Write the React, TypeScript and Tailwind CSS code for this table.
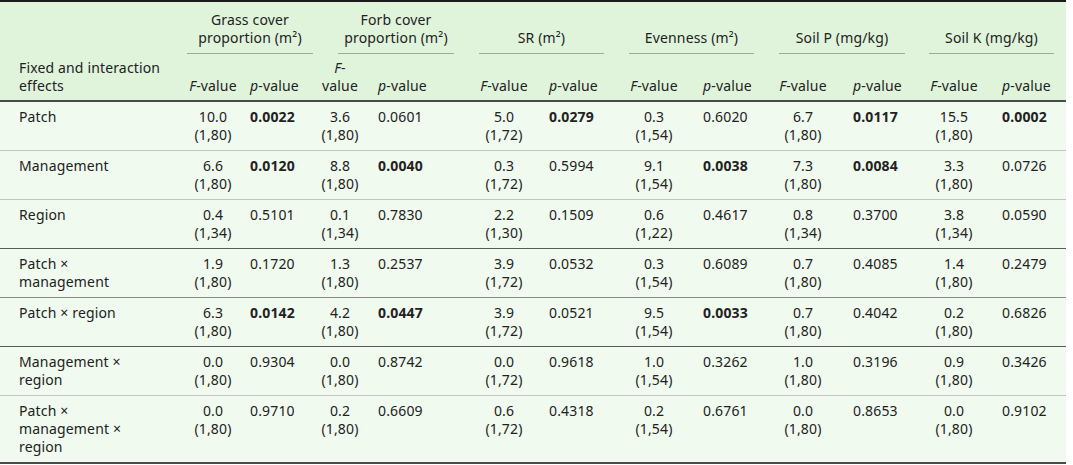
import React from "react";

type Cell = { f: string; df: string; p: string; bold?: boolean };

interface IRow {
  label: React.ReactNode;
  cells: Cell[];
  border: string;
}

const widths = [182, 62, 64, 64, 93, 78, 68, 86, 62, 88, 65, 84, 70];

const groups = [
  { title: <>Grass cover<br />proportion (m²)</>, line: "ml-[5px] w-[126px]" },
  { title: <>Forb cover<br />proportion (m²)</>, line: "ml-[30px] w-[116px]" },
  { title: <>SR (m²)</>, line: "ml-[14px] w-[125px]" },
  { title: <>Evenness (m²)</>, line: "ml-[18px] w-[125px]" },
  { title: <>Soil P (mg/kg)</>, line: "ml-[20px] w-[126px]" },
  { title: <>Soil K (mg/kg)</>, line: "ml-[17px] w-[125px]" },
];

const c = (f: string, df: string, p: string, bold = false): Cell => ({ f, df, p, bold });

const rows: IRow[] = [
  {
    label: "Patch",
    border: "border-b border-[#c4c4c4]",
    cells: [
      c("10.0", "(1,80)", "0.0022", true),
      c("3.6", "(1,80)", "0.0601"),
      c("5.0", "(1,72)", "0.0279", true),
      c("0.3", "(1,54)", "0.6020"),
      c("6.7", "(1,80)", "0.0117", true),
      c("15.5", "(1,80)", "0.0002", true),
    ],
  },
  {
    label: "Management",
    border: "border-b border-[#c4c4c4]",
    cells: [
      c("6.6", "(1,80)", "0.0120", true),
      c("8.8", "(1,80)", "0.0040", true),
      c("0.3", "(1,72)", "0.5994"),
      c("9.1", "(1,54)", "0.0038", true),
      c("7.3", "(1,80)", "0.0084", true),
      c("3.3", "(1,80)", "0.0726"),
    ],
  },
  {
    label: "Region",
    border: "border-b border-[#5a5a5a]",
    cells: [
      c("0.4", "(1,34)", "0.5101"),
      c("0.1", "(1,34)", "0.7830"),
      c("2.2", "(1,30)", "0.1509"),
      c("0.6", "(1,22)", "0.4617"),
      c("0.8", "(1,34)", "0.3700"),
      c("3.8", "(1,34)", "0.0590"),
    ],
  },
  {
    label: <>Patch ×<br />management</>,
    border: "border-b border-[#8a8a8a]",
    cells: [
      c("1.9", "(1,80)", "0.1720"),
      c("1.3", "(1,80)", "0.2537"),
      c("3.9", "(1,72)", "0.0532"),
      c("0.3", "(1,54)", "0.6089"),
      c("0.7", "(1,80)", "0.4085"),
      c("1.4", "(1,80)", "0.2479"),
    ],
  },
  {
    label: "Patch × region",
    border: "border-b border-[#5a5a5a]",
    cells: [
      c("6.3", "(1,80)", "0.0142", true),
      c("4.2", "(1,80)", "0.0447", true),
      c("3.9", "(1,72)", "0.0521"),
      c("9.5", "(1,54)", "0.0033", true),
      c("0.7", "(1,80)", "0.4042"),
      c("0.2", "(1,80)", "0.6826"),
    ],
  },
  {
    label: <>Management ×<br />region</>,
    border: "border-b border-[#c4c4c4]",
    cells: [
      c("0.0", "(1,80)", "0.9304"),
      c("0.0", "(1,80)", "0.8742"),
      c("0.0", "(1,72)", "0.9618"),
      c("1.0", "(1,54)", "0.3262"),
      c("1.0", "(1,80)", "0.3196"),
      c("0.9", "(1,80)", "0.3426"),
    ],
  },
  {
    label: <>Patch ×<br />management ×<br />region</>,
    border: "border-b-2 border-[#4a4a4a]",
    cells: [
      c("0.0", "(1,80)", "0.9710"),
      c("0.2", "(1,80)", "0.6609"),
      c("0.6", "(1,72)", "0.4318"),
      c("0.2", "(1,54)", "0.6761"),
      c("0.0", "(1,80)", "0.8653"),
      c("0.0", "(1,80)", "0.9102"),
    ],
  },
];

const FHead = () => (
  <>
    <i>F</i>-value
  </>
);
const PHead = () => (
  <>
    <i>p</i>-value
  </>
);

export default function App() {
  return (
    <div className="w-[1073px] h-[465px] bg-white overflow-hidden">
      <table
        className="table-fixed border-collapse w-[1066px] text-[14px] tracking-[0.15px] leading-[18px] text-[#222] whitespace-nowrap"
        style={{ fontFamily: '"Noto Sans", "Open Sans", sans-serif' }}
      >
        <colgroup>
          {widths.map((w, i) => (
            <col key={i} style={{ width: w }} />
          ))}
        </colgroup>
        <thead className="bg-[#dff4db]">
          <tr className="border-t-2 border-[#1a1a1a]">
            <th
              rowSpan={2}
              className="font-normal text-left align-bottom pl-[19px] pb-[5px]"
            >
              Fixed and interaction
              <br />
              effects
            </th>
            {groups.map((g, i) => (
              <th key={i} colSpan={2} className="font-normal p-0 align-bottom pt-[9px]">
                <div className={`${g.line} text-center border-b border-[#9aab98] pb-[6px]`}>
                  {g.title}
                </div>
              </th>
            ))}
          </tr>
          <tr className="border-b-2 border-[#4a4a4a]">
            {groups.map((_, i) => (
              <React.Fragment key={i}>
                <th className="font-normal text-center align-bottom pt-[5px] pb-[5px]">
                  {i === 1 ? (
                    <>
                      <i>F</i>-<br />value
                    </>
                  ) : (
                    <FHead />
                  )}
                </th>
                <th className="font-normal text-left align-bottom pl-[6px] pb-[5px]">
                  <PHead />
                </th>
              </React.Fragment>
            ))}
          </tr>
        </thead>
        <tbody className="bg-[#f0faef]">
          {rows.map((r, ri) => (
            <tr key={ri} className={r.border}>
              <td className="align-top pl-[19px] pt-[6px] pb-[6px]">{r.label}</td>
              {r.cells.map((cell, ci) => (
                <React.Fragment key={ci}>
                  <td className="align-top text-center pt-[6px] pb-[6px]">
                    {cell.f}
                    <br />
                    {cell.df}
                  </td>
                  <td
                    className={`align-top text-left pl-[6px] pt-[6px] pb-[6px] ${
                      cell.bold ? "font-bold" : ""
                    }`}
                  >
                    {cell.p}
                  </td>
                </React.Fragment>
              ))}
            </tr>
          ))}
        </tbody>
      </table>
    </div>
  );
}
